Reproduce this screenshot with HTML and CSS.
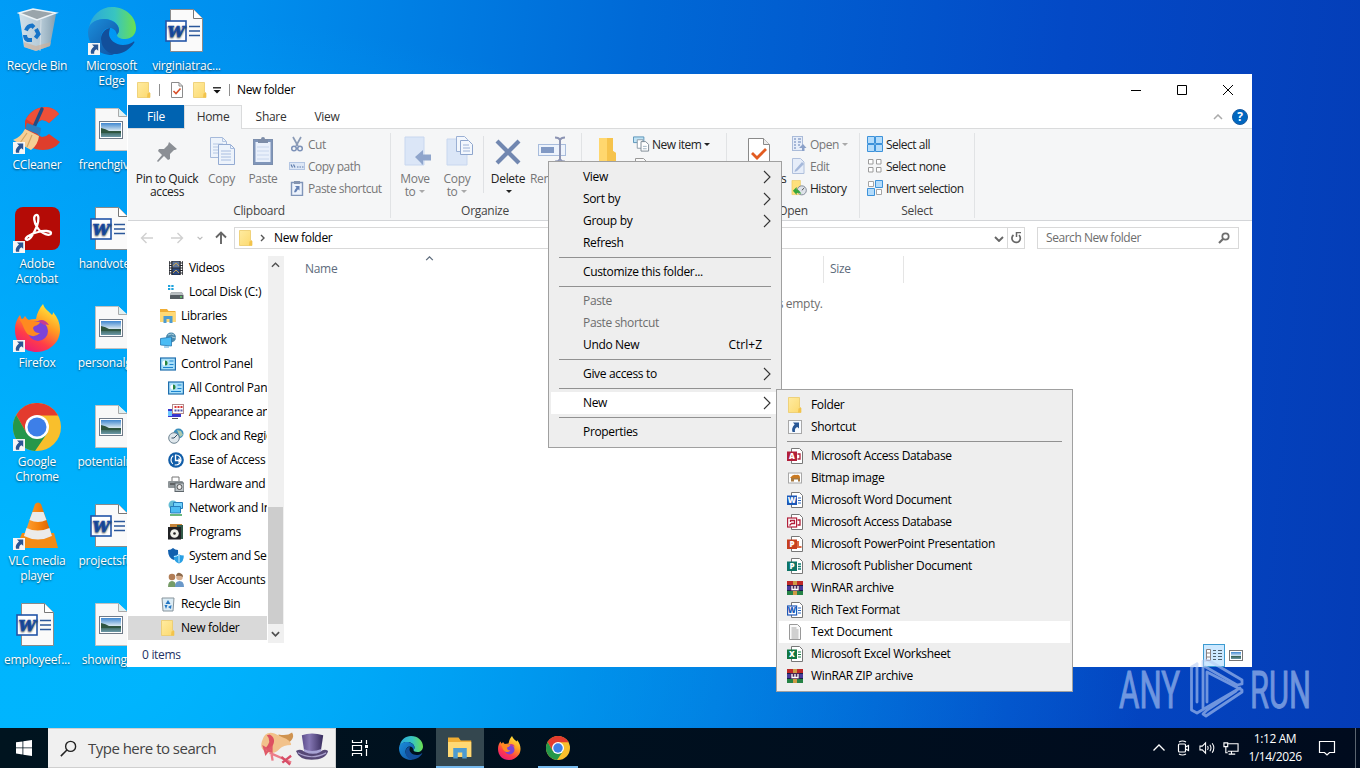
FILE: index.html
```html
<!DOCTYPE html>
<html lang="en">
<head>
    <meta charset="UTF-8">
    <meta name="viewport" content="width=device-width, initial-scale=1.0">
    <title>New folder</title>
    <link rel="stylesheet" href="styles.css">
</head>
<body>

<!-- Icon sprite -->
<svg class="sprite" aria-hidden="true">
  <defs>
    <linearGradient id="g-edge1" x1="0" y1="0" x2="1" y2="0"><stop offset="0" stop-color="#2aa7dc"/><stop offset=".55" stop-color="#38c5c0"/><stop offset="1" stop-color="#6be04f"/></linearGradient>
    <linearGradient id="g-edge2" x1="0" y1="0" x2="1" y2="1"><stop offset="0" stop-color="#1b8fdc"/><stop offset="1" stop-color="#0f50a0"/></linearGradient>
    <linearGradient id="g-fox" x1=".8" y1="0" x2=".25" y2="1"><stop offset="0" stop-color="#fff13f"/><stop offset=".4" stop-color="#ff9a22"/><stop offset=".72" stop-color="#ff3c48"/><stop offset="1" stop-color="#e8197d"/></linearGradient>
    <linearGradient id="g-fold" x1="0" y1="0" x2="1" y2="1"><stop offset="0" stop-color="#ffeba0"/><stop offset="1" stop-color="#fcd96e"/></linearGradient>
    <linearGradient id="g-photo" x1="0" y1="0" x2="0" y2="1"><stop offset="0" stop-color="#3f87d0"/><stop offset=".55" stop-color="#d5e6f0"/><stop offset=".6" stop-color="#35604f"/><stop offset="1" stop-color="#6c98a8"/></linearGradient>
    <linearGradient id="g-cone" x1="0" y1="0" x2="1" y2="0"><stop offset="0" stop-color="#ffa43a"/><stop offset=".5" stop-color="#f58410"/><stop offset="1" stop-color="#d95f00"/></linearGradient>
    <linearGradient id="g-bin" x1="0" y1="0" x2="1" y2="0"><stop offset="0" stop-color="#dfe6ea"/><stop offset=".6" stop-color="#c2ccd3"/><stop offset="1" stop-color="#8fa0ab"/></linearGradient>
    <linearGradient id="g-hat" x1="0" y1="0" x2="1" y2="0"><stop offset="0" stop-color="#5d4d8c"/><stop offset=".35" stop-color="#8577b4"/><stop offset="1" stop-color="#372b5c"/></linearGradient>
  </defs>

  <symbol id="shortcut-badge" viewBox="0 0 12 12">
    <rect width="12" height="12" fill="#f6f6f6"/>
    <path d="M4 1.500h6.200v6.200L8.500 6.200Q5.800 7.500 6.200 10.700H3Q1.800 7 6 3.600z" fill="#2a5593"/>
  </symbol>
  <symbol id="recycle" viewBox="0 0 48 48">
    <path d="M6 6l5 34 12 4 14-5 6-32-20 5z" fill="url(#g-bin)" opacity=".93"/>
    <path d="M6 6l14-4 23 4-19 7z" fill="#9aa5ab" stroke="#edf3f6" stroke-width="1.500"/>
    <path d="M28 13l-1 31" stroke="#e9eef1" opacity=".6"/>
    <g fill="none" stroke="#1674c8" stroke-width="4"><path d="M13 23.500q2-5 6-5l2 2"/><path d="M23 22l2.500 5-3 4"/><path d="M19 33h-4q-3-1-3-5"/></g>
    <path d="M11 40l12 4 14-5 1-4-15 4-12-4z" fill="#cfae94" opacity=".6"/>
  </symbol>
  <symbol id="edge" viewBox="0 0 48 48">
    <path d="M1 21C3 8 13 0 24 0c14 0 24 10 24 21 0 7-5 11-11 11-5 0-8-2-8-4 0-1 2-2 2-5 0-6-6-11-14-11C9 12 3 16 1 21z" fill="url(#g-edge1)"/>
    <path d="M24 48C10 48 0 38 0 25 0 17 7 12 16 12c8 0 15 5 15 11 0 3-2 4-2 5-1-5-4-7-7-7-5 0-9 4-9 10 0 8 7 14 15 15z" fill="url(#g-edge2)"/>
    <path d="M22 21c-5 1-9 5-9 11 0 9 8 16 16 15 7-1 13-5 17-11 1-1 0-2-1-1-3 2-6 3-10 3-8 0-14-6-14-11 0-3 1-5 1-6z" fill="#124f9b"/>
  </symbol>
  <symbol id="word" viewBox="0 0 48 48">
    <path d="M9.500 2.500h23l9 9v33h-32z" fill="#fafafa" stroke="#8a8a8a"/>
    <path d="M32.500 2.500v9h9" fill="#fff" stroke="#777"/>
    <path d="M28 19.500h11M28 24h11M28 28.500h11" stroke="#2b579a" stroke-width="1.300"/>
    <rect x="5" y="14" width="20" height="20" fill="#fff" stroke="#2355a8" stroke-width="1.600"/>
    <text x="15" y="30" text-anchor="middle" font-family="DejaVu Serif, serif" font-size="15" font-weight="bold" font-style="italic" fill="#1c51ac" stroke="#1c51ac" stroke-width=".7" textLength="17" lengthAdjust="spacingAndGlyphs">W</text>
  </symbol>
  <symbol id="photo" viewBox="0 0 48 48">
    <path d="M9.500 2.500h23l9 9v33h-32z" fill="#f8f8f8" stroke="#c0c0c0"/>
    <path d="M32.500 2.500v8h9" fill="#dff0f2" stroke="#aaa"/>
    <rect x="13.500" y="15.500" width="23" height="17" fill="#fff" stroke="#6f7a88"/>
    <rect x="15" y="17" width="20" height="14" fill="url(#g-photo)"/>
    <path d="M15 22q5 1 8 3h12v2H15z" fill="#2f5540"/>
  </symbol>
  <symbol id="ccleaner" viewBox="0 0 48 48">
    <path d="M46 8Q42 2 33 1A22 22 0 0 0 12 15v18Q16 44 30 44q11 0 17-8L36 28q-3 3-7 3a9 9 0 0 1 0-17q4 0 7 3z" fill="#df3e2c"/>
    <path d="M46 8Q42 2 33 1A22 22 0 0 0 13 13l9 6q2-5 7-5 4 0 7 3z" fill="#ef5038"/>
    <path d="M29 3l-8 18" stroke="#214d86" stroke-width="3.400" stroke-linecap="round"/>
    <path d="M14 17l14 5-1 7-15-6z" fill="#2c7fc0"/>
    <path d="M12 23l14 7q-1 9-8 14L0 34q8-3 12-11z" fill="#f5cf96"/>
    <path d="M14 27l-7 10M19 29l-5 12" stroke="#d5a463" stroke-width="1.200"/>
  </symbol>
  <symbol id="acrobat" viewBox="0 0 48 48">
    <rect x="2" y="2" width="45" height="43" rx="8" fill="#b40b06"/>
    <path d="M23 10c3-1 3 5 1 11-3 7-7 14-10 14-4-1 2-6 11-8 6-2 13-1 13 1 0 4-10 1-14-6-3-5-4-11-1-12z" fill="none" stroke="#fff" stroke-width="2.300"/>
  </symbol>
  <symbol id="firefox" viewBox="0 0 48 48">
    <path d="M30 0c2 6 6 7 9 11 1-1 1-2 1-3 8 9 9 20 4 29-5 7-12 11-20 11C11 48 2 39 2 26c0-7 2-11 5-15l2 5 3-4 3 4q4-1 8-1c1-6 3-10 7-15z" fill="url(#g-fox)"/>
    <circle cx="25" cy="27" r="10" fill="#7b43d8"/>
    <path d="M6 15q8-1 12 2l9 1c-1 4-6 3-7 6 1 4 3 5 7 5q-5 5-11 2C11 28 11 21 6 15z" fill="#ff8a20"/>
    <path d="M25 17q6-3 11 4-3-1-5 0z" fill="#c43b95"/>
  </symbol>
  <symbol id="chrome" viewBox="0 0 48 48">
    <circle cx="24" cy="24" r="24" fill="#f9bf2c"/>
    <path d="M3.200 12A24 24 0 0 1 44.800 12L44.800 12.500H24L13.600 30z" fill="#e33b2e"/>
    <path d="M3.200 12A24 24 0 0 0 22 48L34.400 30H13.600z" fill="#25974a"/>
    <circle cx="24" cy="24" r="12" fill="#fff"/>
    <circle cx="24" cy="24" r="9.500" fill="#3d7fe8"/>
  </symbol>
  <symbol id="vlc" viewBox="0 0 48 48">
    <path d="M9 31h32l4 15H3z" fill="#f38b16"/>
    <path d="M22 2q3-3 6 0l11 32q-14 7-28 0z" fill="url(#g-cone)"/>
    <path d="M19.500 10h11l3 8q-8.500 4-17 0zM13.500 26q11 5 23 0l2.500 8q-14 7-28 0z" fill="#ebebeb"/>
  </symbol>

  <symbol id="folder" viewBox="0 0 16 16">
    <path d="M1.500.5h11v10l1.500.5v4.500H1.500z" fill="url(#g-fold)" stroke="#ecca68" stroke-width=".8"/>
    <path d="M11.500 11.500L14 10.500v5h-3z" fill="#f3c34b"/>
  </symbol>
  <symbol id="check-page" viewBox="0 0 16 16">
    <path d="M2.500.500h7.500l3.500 3.500v11.500h-11z" fill="#fff" stroke="#8b8b8b"/><path d="M10 .5V4h3.500" fill="none" stroke="#8b8b8b"/>
    <path d="M4.500 9l2.500 2.500 4.500-5" fill="none" stroke="#d9502a" stroke-width="1.600"/>
  </symbol>
  <symbol id="pin" viewBox="0 0 24 24">
    <path d="M14 2l8 7-2 1-1 0-4 4 0 5-2 1-4-4-6 6-1-1 5-6-4-4 1-2 5 0 4-4z" fill="#8b8f95"/>
  </symbol>
  <symbol id="copy" viewBox="0 0 28 30">
    <path d="M2.500 1.500h12l4 4v16h-16z" fill="#edf3fb" stroke="#a6badb"/><path d="M14.500 1.500v4h4M5 8h10M5 11h10M5 14h10M5 17h10" fill="none" stroke="#b5c7e3"/>
    <path d="M10.500 8.500h12l4 4v16h-16z" fill="#edf3fb" stroke="#94abd2"/><path d="M22.500 8.500v4h4M13 15h10M13 18h10M13 21h10M13 24h10" fill="none" stroke="#a8bde0"/>
  </symbol>
  <symbol id="paste" viewBox="0 0 24 30">
    <rect x="2.500" y="3.500" width="19" height="25" fill="#8096ba" stroke="#7c8fae"/><rect x="4.500" y="6" width="15" height="20" fill="#e9f0fb"/>
    <path d="M7 3h3q0-2 2-2t2 2h3v4H7z" fill="#7d8da8"/><path d="M6 11h12M6 15h12M6 19h12M6 23h12" stroke="#c8d6ed"/>
  </symbol>
  <symbol id="cut" viewBox="0 0 16 16">
    <path d="M4 1l5 9M12 1L7 10" stroke="#8b9bb6" stroke-width="1.700"/><circle cx="5" cy="12.500" r="2.300" fill="none" stroke="#7d92b8" stroke-width="1.500"/><circle cx="11" cy="12.500" r="2.300" fill="none" stroke="#7d92b8" stroke-width="1.500"/>
  </symbol>
  <symbol id="copy-path" viewBox="0 0 16 16">
    <rect x=".5" y="4.500" width="15" height="7" fill="#dde7f6" stroke="#b4c6e3"/><path d="M2 6.500l1.500 3M4.500 6.500l1.500 3M8 9h1.500M10.500 9H12M13 9h1.500" stroke="#5e7bab" stroke-width="1.200"/>
  </symbol>
  <symbol id="paste-shortcut" viewBox="0 0 16 16">
    <path d="M2.500 2.500h11v13h-11z" fill="#edf3fc" stroke="#8095b9" stroke-width="1.400"/><path d="M5 1h6v3H5z" fill="#8494b0"/><path d="M6 6h4.500v4.500L9 9.300l-2 3H5q.5-3 2.500-4.500z" fill="#6481b5"/>
  </symbol>
  <symbol id="move-to" viewBox="0 0 28 30">
    <path d="M2 1h19v28H2z" fill="#dbe6f7" stroke="#c8d7ef"/><path d="M18 26l3-1v4h-3z" fill="#c6d5ee"/><path d="M12 21l8-7v4.500h8v6h-8V29z" fill="#8fa5cc"/>
  </symbol>
  <symbol id="copy-to" viewBox="0 0 28 30">
    <path d="M1 3h20v26H1z" fill="#dbe6f7" stroke="#c8d7ef"/><path d="M10.500.500h8l3 3v12h-11z" fill="#f3f7fd" stroke="#9bb0d4"/><path d="M14.500 4.500h8l4 4v10h-12z" fill="#f3f7fd" stroke="#8fa6cd"/><path d="M17 9h6M17 12h7M17 15h7" stroke="#9db2d6"/>
  </symbol>
  <symbol id="delete" viewBox="0 0 28 28"><path d="M3 3l22 22M25 3L3 25" stroke="#7187b0" stroke-width="4.200"/></symbol>
  <symbol id="rename" viewBox="0 0 30 28">
    <rect x="1.500" y="8.500" width="27" height="11" fill="#edf3fc" stroke="#a8bcdc"/><rect x="4" y="11" width="13" height="6" fill="#8199c4"/>
    <path d="M18 1.500q4 0 5 2.500 1-2.500 5-2.500M23 4v19M18 25.500q4 0 5-2.500 1 2.500 5 2.500" fill="none" stroke="#8c94b3" stroke-width="2"/>
  </symbol>
  <symbol id="new-folder" viewBox="0 0 20 28"><path d="M1 2h14v13l3 2v10H1z" fill="#ffd76e"/><path d="M9 2h6v13l3 2v10H9z" fill="#f6c34c"/></symbol>
  <symbol id="new-item" viewBox="0 0 18 16">
    <path d="M.5.500h11v6H.5z" fill="#bfe3f5" stroke="#5a93b8"/><path d="M4.500 3.500h6v9h-6z" fill="#fff" stroke="#8b99a6"/><path d="M8.500 5.500h5l3 3v7h-8z" fill="#fff" stroke="#7c8894"/><path d="M10.500 10.500h4M10.500 13h4" stroke="#9fb2c2"/>
  </symbol>
  <symbol id="properties" viewBox="0 0 22 28"><path d="M.5.500h15l6 6v21H.5z" fill="#fff" stroke="#8a8a8a"/><path d="M15.500.500v6h6" fill="#ececec" stroke="#8a8a8a"/><path d="M4 15l5 5L18 11" fill="none" stroke="#e25b20" stroke-width="2.800"/></symbol>
  <symbol id="open" viewBox="0 0 16 16">
    <rect x="1.500" y=".5" width="10" height="14" fill="#e6edf9" stroke="#aabbd9"/><path d="M3 3h2M3 6h2M3 9h2M3 12h2M7 3h3M7 6h3M7 9h2" stroke="#8ea4cb" stroke-width="1.500"/><path d="M11 15v-3H8l4-4 3.500 4h-2v3z" fill="#8ba1c9"/>
  </symbol>
  <symbol id="edit" viewBox="0 0 16 16"><path d="M1.500.500h8l3.500 3.500v11.500H1.500z" fill="#e6edf9" stroke="#b0c0dc"/><path d="M4 12l7-8 2 2-7 7-2.500 1z" fill="#a5b8da"/></symbol>
  <symbol id="history" viewBox="0 0 17 16"><path d="M1 0h9v15H1z" fill="#ffe07c" stroke="#e8c458" stroke-width=".6"/><circle cx="11.500" cy="10.500" r="4.800" fill="#dfe3ea" stroke="#7e8794"/><path d="M11.500 10.500l2.500-2.500" stroke="#444"/><path d="M2 11l4-4v2.500q3 0 5 5-4-2-5-1v2z" fill="#37a53c"/></symbol>
  <symbol id="select-all" viewBox="0 0 16 16"><path d="M.500.500h7v7h-7zM8.500.500h7v7h-7zM.5 8.500h7v7h-7zM8.500 8.500h7v7h-7z" fill="#b4dcfb" stroke="#3d92da"/></symbol>
  <symbol id="select-none" viewBox="0 0 16 16"><path d="M1.500 1.500h4.500v4.500H1.500zM9.500 1.500h4.500v4.500H9.500zM1.500 9.500h4.500v4.500H1.500zM9.500 9.500h4.500v4.500H9.500z" fill="#fff" stroke="#9c9c9c"/></symbol>
  <symbol id="select-invert" viewBox="0 0 16 16"><path d="M1.500 1.500h5v5h-5zM9.500 9.500h5v5h-5z" fill="#fff" stroke="#a5a5a5"/><path d="M8.500.500h7v7h-7zM.5 8.500h7v7h-7z" fill="#b4dcfb" stroke="#3d92da"/></symbol>

  <symbol id="chev-right" viewBox="0 0 8 14"><path d="M1 1l6 6-6 6" fill="none" stroke="#333" stroke-width="1.100"/></symbol>
  <symbol id="crumb-right" viewBox="0 0 5 8"><path d="M1 1l3 3-3 3" fill="none" stroke="#555" stroke-width="1.400"/></symbol>
  <symbol id="chev-up" viewBox="0 0 10 6"><path d="M1 5l4-4 4 4" fill="none" stroke="currentColor" stroke-width="1.500"/></symbol>
  <symbol id="chev-down" viewBox="0 0 10 6"><path d="M1 1l4 4 4-4" fill="none" stroke="currentColor" stroke-width="1.900"/></symbol>
  <symbol id="arrow-left" viewBox="0 0 14 12"><path d="M13 6H2M6.500 1L1.500 6l5 5" fill="none" stroke="currentColor" stroke-width="1.400"/></symbol>
  <symbol id="arrow-up" viewBox="0 0 12 14"><path d="M6 13V2M1 6.500L6 1.500l5 5" fill="none" stroke="#666" stroke-width="1.900"/></symbol>
  <symbol id="refresh" viewBox="0 0 12 12"><path d="M9 3.200A4.200 4.200 0 1 1 3.500 3" fill="none" stroke="#666" stroke-width="1.700"/><path d="M6.500 0v4.500H11" fill="none" stroke="#666" stroke-width="1.500" transform="rotate(90 8.500 2.500)"/></symbol>
  <symbol id="magnifier" viewBox="0 0 16 16"><circle cx="10" cy="6" r="4.700" fill="none" stroke="currentColor" stroke-width="1.300"/><path d="M6.500 9.500L.8 15.200" stroke="currentColor" stroke-width="1.400"/></symbol>
  <symbol id="magnifier-bold" viewBox="0 0 12 12"><circle cx="7.500" cy="4.500" r="3.200" fill="none" stroke="#6d6d6d" stroke-width="1.700"/><path d="M5 7L1 11" stroke="#6d6d6d" stroke-width="2.200"/></symbol>

  <symbol id="videos" viewBox="0 0 16 16"><rect x="1" y="1" width="14" height="14" fill="#26282e"/><rect x="4.500" y="1.500" width="7" height="6" fill="#61779b"/><rect x="4.500" y="8.500" width="7" height="6" fill="#2c4a82"/><path d="M2.500 1v14M13.500 1v14" stroke="#fff" stroke-width="1.500" stroke-dasharray="1.500 1"/><path d="M5 6l3-3 3 3M5 13l3-3 3 3" fill="none" stroke="#c5a152"/></symbol>
  <symbol id="disk" viewBox="0 0 16 16"><path d="M0 1h2.300v2H0zM3.300 1h2.300v2H3.300zM0 4h2.300v2H0zM3.300 4h2.300v2H3.300z" fill="#1fa3dd"/><path d="M3 8.500h11l1.500 3v3.500H2v-3.500z" fill="#555c61"/><path d="M3 8.500h11l1.500 2.500H2z" fill="#b9bec1"/><rect x="12" y="12.300" width="2" height="1.300" fill="#66df69"/></symbol>
  <symbol id="libraries" viewBox="0 0 16 16"><path d="M0 1h7l1.500 2H15.500v11H0z" fill="#f0ad33"/><path d="M0 4h15.500v10H0z" fill="#ffd974"/><path d="M3.500 15V8h9v7h-3v-4h-3v4z" fill="#4d9bd0"/></symbol>
  <symbol id="network" viewBox="0 0 16 16"><circle cx="11" cy="5.500" r="5" fill="#4e8cae"/><path d="M8 3q4-2 6 0M7 6q5-2 9 0" stroke="#a8cddc" fill="none"/><path d="M.500 6.500l11-1.500v9l-11-1z" fill="#4bbcf5" stroke="#2678b3" stroke-width=".8"/><path d="M4 15h5" stroke="#54a8de"/></symbol>
  <symbol id="control" viewBox="0 0 16 16"><rect x=".6" y="2" width="14.800" height="12" fill="#a9e0fa" stroke="#1e6eae" stroke-width="1.200"/><circle cx="5" cy="7" r="2.600" fill="#fff"/><path d="M5 7V4.400A2.600 2.600 0 0 1 5 9.600z" fill="#238442"/><path d="M9.500 5h4M9.500 8.500h4M3 11.500h10" stroke="#1e85d0" stroke-width="1.200"/></symbol>
  <symbol id="appearance" viewBox="0 0 16 16"><rect x="0" y="5" width="13" height="8" fill="#3936cf"/><path d="M0 7h4v5H0z" fill="#6ec7ff"/><rect x="4.500" y=".5" width="11" height="9" fill="#fff" stroke="#b48a8a"/><path d="M6.500 3h2M9.500 3h2M12.500 3h2" stroke="#da3535" stroke-width="2"/><path d="M6.500 6.500h2M9.500 6.500h2M12.500 6.500h2" stroke="#4a54aa" stroke-width="2"/><path d="M4 14.500h6" stroke="#555"/></symbol>
  <symbol id="clock" viewBox="0 0 16 16"><circle cx="10.500" cy="5.500" r="5" fill="#3c8fbc"/><path d="M9 2l4 1 2 4-3 2z" fill="#adc9ae"/><circle cx="6" cy="10" r="5.300" fill="#dfe7ec" stroke="#6e8392"/><path d="M6 10l3.500-3.500M6 10H3.500" stroke="#344d61"/></symbol>
  <symbol id="ease" viewBox="0 0 16 16"><circle cx="8" cy="8" r="7.800" fill="#115da8"/><circle cx="8" cy="8" r="5" fill="none" stroke="#fff" stroke-width="1.200" stroke-dasharray="9 2"/><path d="M7.500 3v5.500h5M10.500 6.500l2 2-2 2" fill="none" stroke="#fff" stroke-width="1.300"/></symbol>
  <symbol id="hardware" viewBox="0 0 16 16"><path d="M4 1h7v5H4z" fill="#fff" stroke="#777"/><rect x="0" y="5" width="15" height="7" rx="1" fill="#8e9598"/><path d="M2 8h8" stroke="#333"/><rect x="7" y="7" width="9" height="8.500" fill="#bbc2c6" stroke="#5e666b"/><circle cx="11.500" cy="11" r="2.500" fill="#eee" stroke="#555"/></symbol>
  <symbol id="netint" viewBox="0 0 16 16"><circle cx="5" cy="5" r="4.500" fill="#64bdd5"/><path d="M5.500 2.500h9v6h-9z" fill="#6fd0fb" stroke="#267ebc"/><path d="M2.500 6.500h10v6.500h-10z" fill="#4dbcf2" stroke="#267ebc"/><path d="M2 15h12" stroke="#59b06f" stroke-width="1.800"/></symbol>
  <symbol id="programs" viewBox="0 0 16 16"><path d="M2 0h12v12H2z" fill="#c7863a"/><path d="M9 1h6v14H9z" fill="#315948"/><rect x="0" y="3" width="13" height="12.500" fill="#202124"/><circle cx="6.500" cy="9.500" r="4.300" fill="#f0f1ea"/><circle cx="6.500" cy="9.500" r="1.300" fill="#222"/></symbol>
  <symbol id="security" viewBox="0 0 16 16"><path d="M0 2q3 0 5-2 2 2 5 2 1 7-4 10Q0 10 0 2z" fill="#1260ae"/><path d="M5.500 8q3 0 5-2 2 1.500 5.300 1.500Q16 14 11 15.500 6 14 5.500 8z" fill="#29a0e4"/><path d="M6 8.500q3 0 5-2v8" fill="none" stroke="#d1efff"/></symbol>
  <symbol id="users" viewBox="0 0 16 16"><path d="M0 15q0-6 4-6t4 6z" fill="#769c67"/><circle cx="4" cy="5" r="3.300" fill="#b17d55"/><path d="M7 15q0-6 4.500-6T16 15z" fill="#6a98c9"/><circle cx="11.500" cy="5" r="3.300" fill="#d7ae8e"/><path d="M8 4q1-4 4-3t3 4q-3-2-7-1z" fill="#8c6a4b"/></symbol>
  <symbol id="bin-small" viewBox="0 0 16 16"><path d="M2 2h12l-1 13H3z" fill="#dcecf5" stroke="#86939b"/><path d="M8 4l2.500 4h-5zM4.500 9h3l-1.500 4zM11.500 9l-.5 4-3-2z" fill="#2376c3"/></symbol>

  <symbol id="shortcut-small" viewBox="0 0 16 16"><rect x="1.500" y="1.500" width="13" height="13" fill="#f8fbff" stroke="#a8a8a8"/><path d="M6 3.500h6v6L10.300 8q-3 1-2.300 5H5.500Q4 9 7.700 5.500z" fill="#285796"/></symbol>
  <symbol id="access1" viewBox="0 0 16 16"><path d="M4.500.500h8l3 3v12h-11z" fill="#fff" stroke="#777"/><path d="M10.500 6H13v5h-2.500" stroke="#b01f38" fill="none" stroke-width="1.300"/><rect y="3.500" width="10" height="9.500" fill="#b21f3a"/><text class="glyph" x="5" y="11.300" fill="#fff">A</text></symbol>
  <symbol id="access2" viewBox="0 0 16 16"><path d="M4.500.500h8l3 3v12h-11z" fill="#fff" stroke="#777"/><path d="M10.500 6H13v5h-2.500" stroke="#b01f38" fill="none" stroke-width="1.300"/><rect x=".6" y="4" width="9" height="9" fill="#fff" stroke="#b21f3a" stroke-width="1.200"/><path d="M3.500 8V6.500h4v3h-3L2.500 11.500" fill="none" stroke="#b21f3a" stroke-width="1.300"/></symbol>
  <symbol id="bitmap" viewBox="0 0 16 16"><rect x="1.500" y="3" width="13" height="10" fill="#fff" stroke="#a8a8a8"/><path d="M3 8q3-4 6-3 4-1 4 3z" fill="#ca7a22"/><path d="M4 8h9v3.500h-2V9.500H7v2H4z" fill="#a8793f"/></symbol>
  <symbol id="word-small" viewBox="0 0 16 16"><path d="M4.500.500h8l3 3v12h-11z" fill="#fff" stroke="#777"/><path d="M11 6h3M11 8.500h3M11 11h3" stroke="#2b66bd"/><rect y="3.500" width="10" height="9.500" fill="#1d58b7"/><text class="glyph" x="5" y="11.300" fill="#fff">W</text></symbol>
  <symbol id="rtf" viewBox="0 0 16 16"><path d="M4.500.500h8l3 3v12h-11z" fill="#fff" stroke="#777"/><path d="M11 6h3M11 8.500h3M11 11h3" stroke="#2b66bd"/><rect x=".6" y="4" width="9" height="9" fill="#fff" stroke="#1d58b7" stroke-width="1.200"/><text class="glyph" x="5" y="11.300" fill="#1d58b7">W</text></symbol>
  <symbol id="ppt" viewBox="0 0 16 16"><path d="M4.500.500h8l3 3v12h-11z" fill="#fff" stroke="#777"/><path d="M11 5v6h3.500" fill="none" stroke="#de6a43" stroke-width="2"/><rect y="3.500" width="10" height="9.500" fill="#c6401f"/><text class="glyph" x="5" y="11.300" fill="#fff">P</text></symbol>
  <symbol id="publisher" viewBox="0 0 16 16"><path d="M4.500.500h8l3 3v12h-11z" fill="#fff" stroke="#777"/><path d="M11 6h3M11 8.500h3M11 11h3" stroke="#0d7c70" stroke-width="1.400"/><rect y="3.500" width="10" height="9.500" fill="#0d7467"/><text class="glyph" x="5" y="11.300" fill="#fff">P</text></symbol>
  <symbol id="excel" viewBox="0 0 16 16"><path d="M4.500.500h8l3 3v12h-11z" fill="#fff" stroke="#777"/><path d="M11 6h3M11 8.500h3M11 11h3" stroke="#157f46" stroke-width="1.200"/><rect y="3.500" width="10" height="9.500" fill="#127641"/><text class="glyph" x="5" y="11.300" fill="#fff">X</text></symbol>
  <symbol id="winrar" viewBox="0 0 16 16"><rect y="1" width="16" height="5" fill="#be2929"/><rect y="6" width="16" height="5" fill="#493b9c"/><rect y="11" width="16" height="4" fill="#258245"/><path d="M0 5.500h16M0 10.500h16" stroke="#15214a"/><rect x="6" y="1" width="4" height="14" fill="#ce9a45"/><rect x="3.500" y="5" width="9" height="6" fill="#4b2854"/><path d="M5 6v3.500h6V6M8 6v3.500" fill="none" stroke="#fff" stroke-width="1.300"/></symbol>
  <symbol id="text-doc" viewBox="0 0 16 16"><path d="M2.500.500h8l3 3v12h-11z" fill="#fafafa" stroke="#999"/><path d="M4.500 4h5M4.500 6h7M4.500 8h7M4.500 10h7M4.500 12h7M4.500 14h7" stroke="#a6a6a6"/></symbol>
</svg>

<div class="desktop">
  <!-- Desktop shortcuts -->
  <div class="icon-grid">
    <div class="icon-column">
      <div class="desk-icon"><div class="pic"><svg><use href="#recycle"/></svg></div><span>Recycle Bin</span></div>
      <div class="desk-icon"><div class="pic linked"><svg><use href="#ccleaner"/></svg><svg class="badge"><use href="#shortcut-badge"/></svg></div><span>CCleaner</span></div>
      <div class="desk-icon"><div class="pic linked"><svg><use href="#acrobat"/></svg><svg class="badge"><use href="#shortcut-badge"/></svg></div><span>Adobe<br>Acrobat</span></div>
      <div class="desk-icon"><div class="pic linked"><svg><use href="#firefox"/></svg><svg class="badge"><use href="#shortcut-badge"/></svg></div><span>Firefox</span></div>
      <div class="desk-icon"><div class="pic linked"><svg><use href="#chrome"/></svg><svg class="badge"><use href="#shortcut-badge"/></svg></div><span>Google<br>Chrome</span></div>
      <div class="desk-icon"><div class="pic linked"><svg><use href="#vlc"/></svg><svg class="badge"><use href="#shortcut-badge"/></svg></div><span>VLC media<br>player</span></div>
      <div class="desk-icon"><div class="pic doc"><svg><use href="#word"/></svg></div><span>employeef...</span></div>
    </div>
    <div class="icon-column">
      <div class="desk-icon"><div class="pic linked"><svg><use href="#edge"/></svg><svg class="badge"><use href="#shortcut-badge"/></svg></div><span>Microsoft<br>Edge</span></div>
      <div class="desk-icon"><div class="pic doc"><svg><use href="#photo"/></svg></div><span>frenchgive...</span></div>
      <div class="desk-icon"><div class="pic doc"><svg><use href="#word"/></svg></div><span>handvotes...</span></div>
      <div class="desk-icon"><div class="pic doc"><svg><use href="#photo"/></svg></div><span>personalgr...</span></div>
      <div class="desk-icon"><div class="pic doc"><svg><use href="#photo"/></svg></div><span>potentialre...</span></div>
      <div class="desk-icon"><div class="pic doc"><svg><use href="#word"/></svg></div><span>projectsful...</span></div>
      <div class="desk-icon"><div class="pic doc"><svg><use href="#photo"/></svg></div><span>showings...</span></div>
    </div>
    <div class="icon-column">
      <div class="desk-icon"><div class="pic doc"><svg><use href="#word"/></svg></div><span>virginiatrac...</span></div>
    </div>
  </div>

  <!-- Explorer window -->
  <div class="window">
    <div class="title-bar">
      <div class="quick-access">
        <svg class="i16"><use href="#folder"/></svg>
        <i class="bar"></i>
        <svg class="i16 props"><use href="#check-page"/></svg>
        <svg class="i16"><use href="#folder"/></svg>
        <svg class="qa-menu" viewBox="0 0 8 7"><path d="M0 .8h8" stroke="#111" stroke-width="1.300"/><path d="M.5 3h7L4 6.500z" fill="#111"/></svg>
        <i class="bar"></i>
      </div>
      <span class="title">New folder</span>
      <div class="caption-buttons">
        <svg viewBox="0 0 12 12"><path d="M1 6.500h10" stroke="#000"/></svg>
        <svg viewBox="0 0 12 12"><path d="M1.500 1.500h9v9h-9z" fill="none" stroke="#000"/></svg>
        <svg viewBox="0 0 12 12"><path d="M1 1l10 10M11 1L1 11" stroke="#000"/></svg>
      </div>
    </div>

    <div class="tabs">
      <span class="tab file">File</span>
      <span class="tab active">Home</span>
      <span class="tab">Share</span>
      <span class="tab">View</span>
      <div class="tabs-right">
        <svg class="collapse"><use href="#chev-up"/></svg>
        <span class="help">?</span>
      </div>
    </div>

    <div class="ribbon">
      <div class="group clipboard">
        <div class="group-body">
          <div class="big pin"><svg><use href="#pin"/></svg><span>Pin to Quick<br>access</span></div>
          <div class="big off copy"><svg><use href="#copy"/></svg><span>Copy</span></div>
          <div class="big off paste"><svg><use href="#paste"/></svg><span>Paste</span></div>
          <div class="small-list">
            <div class="small off"><svg class="i16"><use href="#cut"/></svg>Cut</div>
            <div class="small off"><svg class="i16"><use href="#copy-path"/></svg>Copy path</div>
            <div class="small off"><svg class="i16"><use href="#paste-shortcut"/></svg>Paste shortcut</div>
          </div>
        </div>
        <div class="group-name">Clipboard</div>
      </div>
      <div class="group organize">
        <div class="group-body">
          <div class="big off move"><svg><use href="#move-to"/></svg><span>Move<br>to <i class="caret"></i></span></div>
          <div class="big off copyto"><svg><use href="#copy-to"/></svg><span>Copy<br>to <i class="caret"></i></span></div>
          <i class="divider"></i>
          <div class="big delete"><svg><use href="#delete"/></svg><span>Delete<br><i class="caret"></i></span></div>
          <div class="big off rename"><svg><use href="#rename"/></svg><span>Rename</span></div>
        </div>
        <div class="group-name">Organize</div>
      </div>
      <div class="group new">
        <div class="group-body">
          <div class="big newfolder"><svg><use href="#new-folder"/></svg><span>New<br>folder</span></div>
          <div class="small-list">
            <div class="small"><svg class="i16 wide"><use href="#new-item"/></svg>New item <i class="caret"></i></div>
            <div class="small"><svg class="i16"><use href="#text-doc"/></svg>Easy access <i class="caret"></i></div>
          </div>
        </div>
        <div class="group-name">New</div>
      </div>
      <div class="group opening">
        <div class="group-body">
          <div class="big properties"><svg><use href="#properties"/></svg><span>Properties</span></div>
          <div class="small-list">
            <div class="small off"><svg class="i16"><use href="#open"/></svg>Open <i class="caret"></i></div>
            <div class="small off"><svg class="i16"><use href="#edit"/></svg>Edit</div>
            <div class="small"><svg class="i16"><use href="#history"/></svg>History</div>
          </div>
        </div>
        <div class="group-name">Open</div>
      </div>
      <div class="group selecting">
        <div class="group-body">
          <div class="small-list">
            <div class="small"><svg class="i16"><use href="#select-all"/></svg>Select all</div>
            <div class="small"><svg class="i16"><use href="#select-none"/></svg>Select none</div>
            <div class="small"><svg class="i16"><use href="#select-invert"/></svg>Invert selection</div>
          </div>
        </div>
        <div class="group-name">Select</div>
      </div>
    </div>

    <div class="nav-bar">
      <div class="history-buttons">
        <svg class="back"><use href="#arrow-left"/></svg>
        <svg class="forward"><use href="#arrow-left"/></svg>
        <svg class="recent"><use href="#chev-down"/></svg>
        <svg class="up"><use href="#arrow-up"/></svg>
      </div>
      <div class="address">
        <svg class="i16"><use href="#folder"/></svg>
        <svg class="crumb"><use href="#crumb-right"/></svg>
        <span>New folder</span>
        <svg class="drop"><use href="#chev-down"/></svg>
        <div class="reload"><svg><use href="#refresh"/></svg></div>
      </div>
      <div class="search">
        <span>Search New folder</span>
        <svg><use href="#magnifier-bold"/></svg>
      </div>
    </div>

    <div class="main">
      <div class="tree">
        <div class="node sub"><svg class="i16"><use href="#videos"/></svg><span>Videos</span></div>
        <div class="node sub"><svg class="i16"><use href="#disk"/></svg><span>Local Disk (C:)</span></div>
        <div class="node"><svg class="i16"><use href="#libraries"/></svg><span>Libraries</span></div>
        <div class="node"><svg class="i16"><use href="#network"/></svg><span>Network</span></div>
        <div class="node"><svg class="i16"><use href="#control"/></svg><span>Control Panel</span></div>
        <div class="node sub"><svg class="i16"><use href="#control"/></svg><span>All Control Panel Items</span></div>
        <div class="node sub"><svg class="i16"><use href="#appearance"/></svg><span>Appearance and Personalization</span></div>
        <div class="node sub"><svg class="i16"><use href="#clock"/></svg><span>Clock and Region</span></div>
        <div class="node sub"><svg class="i16"><use href="#ease"/></svg><span>Ease of Access</span></div>
        <div class="node sub"><svg class="i16"><use href="#hardware"/></svg><span>Hardware and Sound</span></div>
        <div class="node sub"><svg class="i16"><use href="#netint"/></svg><span>Network and Internet</span></div>
        <div class="node sub"><svg class="i16"><use href="#programs"/></svg><span>Programs</span></div>
        <div class="node sub"><svg class="i16"><use href="#security"/></svg><span>System and Security</span></div>
        <div class="node sub"><svg class="i16"><use href="#users"/></svg><span>User Accounts</span></div>
        <div class="node"><svg class="i16"><use href="#bin-small"/></svg><span>Recycle Bin</span></div>
        <div class="node selected"><svg class="i16"><use href="#folder"/></svg><span>New folder</span></div>
      </div>
      <div class="scrollbar">
        <svg><use href="#chev-up"/></svg>
        <div class="thumb"></div>
        <svg><use href="#chev-down"/></svg>
      </div>
      <div class="files">
        <div class="columns">
          <div class="col name">Name<svg class="sort"><use href="#chev-up"/></svg></div>
          <div class="col size">Size</div>
        </div>
        <div class="empty">This folder is empty.</div>
      </div>
    </div>

    <div class="status-bar">
      <span>0 items</span>
      <div class="view-modes">
        <div class="mode on"><svg viewBox="0 0 18 16"><path d="M1.500 2.500h4v11h-4zM1.500 6h4M1.500 10h4" fill="#fff" stroke="#8a8080"/><path d="M8 3.500h3M13 3.500h4M8 6.500h3M13 6.500h4M8 9.500h3M13 9.500h4M8 12.500h3M13 12.500h4" stroke="#4c5f6c"/></svg></div>
        <div class="mode"><svg viewBox="0 0 18 16"><rect x="2.500" y="3.500" width="13" height="10" fill="#fff" stroke="#777"/><rect x="4" y="5" width="10" height="7" fill="url(#g-photo)"/></svg></div>
      </div>
    </div>
  </div>

  <!-- Context menu -->
  <div class="menu context">
    <div class="item">View<svg><use href="#chev-right"/></svg></div>
    <div class="item">Sort by<svg><use href="#chev-right"/></svg></div>
    <div class="item">Group by<svg><use href="#chev-right"/></svg></div>
    <div class="item">Refresh</div>
    <hr>
    <div class="item">Customize this folder...</div>
    <hr>
    <div class="item off">Paste</div>
    <div class="item off">Paste shortcut</div>
    <div class="item">Undo New<kbd>Ctrl+Z</kbd></div>
    <hr>
    <div class="item">Give access to<svg><use href="#chev-right"/></svg></div>
    <hr>
    <div class="item hot">New<svg><use href="#chev-right"/></svg></div>
    <hr>
    <div class="item">Properties</div>
  </div>

  <!-- "New" submenu -->
  <div class="menu submenu">
    <div class="item"><svg class="i16"><use href="#folder"/></svg>Folder</div>
    <div class="item"><svg class="i16"><use href="#shortcut-small"/></svg>Shortcut</div>
    <hr>
    <div class="item"><svg class="i16"><use href="#access1"/></svg>Microsoft Access Database</div>
    <div class="item"><svg class="i16"><use href="#bitmap"/></svg>Bitmap image</div>
    <div class="item"><svg class="i16"><use href="#word-small"/></svg>Microsoft Word Document</div>
    <div class="item"><svg class="i16"><use href="#access2"/></svg>Microsoft Access Database</div>
    <div class="item"><svg class="i16"><use href="#ppt"/></svg>Microsoft PowerPoint Presentation</div>
    <div class="item"><svg class="i16"><use href="#publisher"/></svg>Microsoft Publisher Document</div>
    <div class="item"><svg class="i16"><use href="#winrar"/></svg>WinRAR archive</div>
    <div class="item"><svg class="i16"><use href="#rtf"/></svg>Rich Text Format</div>
    <div class="item hot"><svg class="i16"><use href="#text-doc"/></svg>Text Document</div>
    <div class="item"><svg class="i16"><use href="#excel"/></svg>Microsoft Excel Worksheet</div>
    <div class="item"><svg class="i16"><use href="#winrar"/></svg>WinRAR ZIP archive</div>
  </div>

  <!-- Watermark -->
  <svg class="watermark" viewBox="0 0 194 66">
    <text x="1" y="52" textLength="61" lengthAdjust="spacingAndGlyphs">ANY</text>
    <text x="132" y="52" textLength="61" lengthAdjust="spacingAndGlyphs">RUN</text>
    <g fill="none" stroke-width="2.800" stroke-linejoin="round" stroke-linecap="round">
      <path d="M79 8L73.500 11V54L79 57L122 32"/>
      <path d="M79 8V46M85 52V5L90 4L124 24V28L119 29L86 10"/>
      <path d="M89 46V16L124 34L124 36L88 60L85 58L89 54L118 35"/>
    </g>
  </svg>

  <!-- Taskbar -->
  <div class="taskbar">
    <div class="start"><svg viewBox="0 0 16 16"><path d="M0 2.300l6.500-.9v6.100H0zM7.300 1.300L16 0v7.500H7.300zM0 8.300h6.500v6.200L0 13.600zM7.300 8.300H16V16l-8.700-1.300z" fill="#fff"/></svg></div>
    <div class="search-box">
      <svg class="mag"><use href="#magnifier"/></svg>
      <span>Type here to search</span>
      <svg class="hats" viewBox="0 0 74 38">
        <path d="M20 5q9 2 14-2c4 6-3 12-12 14z" fill="#cf9350"/>
        <path d="M3 12Q6 1 16 4l8 4q9 3 9 8-8 0-12 4-4 5-10 4Q0 22 3 12z" fill="#f2c28b"/>
        <path d="M11 5Q20 10 11 21L6 20Q14 12 8 6z" fill="#dd5160"/>
        <path d="M5 18l5 3-3 4zM10 20l3-2v6z" fill="#ec6c78" stroke="#df5a68" stroke-width="2"/>
        <path d="M11 24l14 6 8 4M13 26l1 6" fill="none" stroke="#ec7c88" stroke-width="2.400"/>
        <path d="M24 34l9-7M23 28l9 8" fill="none" stroke="#d74d67" stroke-width="2.400"/>
        <path d="M44 6q10-4 22 0l-3 20H47z" fill="url(#g-hat)"/>
        <path d="M46 20q8 4 18 0v6H47z" fill="#a9a4d6"/>
        <path d="M38 22q5-3 9 1 9 4 16 0 4-4 8-1-2 9-17 9-13 0-16-9z" fill="#564876"/>
        <path d="M40 24q14 8 29 0" fill="none" stroke="#aaa1ce" stroke-width="1.200"/>
      </svg>
    </div>
    <div class="task-view"><svg viewBox="0 0 18 18"><path d="M1.500 1v2.500h9V1M1.500 17v-2.500h9V17M1.500 6.500h9v5h-9zM15.500 1v4M15.500 10v7" fill="none" stroke="#fff" stroke-width="1.200"/><rect x="14" y="6" width="3" height="3" fill="#fff"/></svg></div>
    <div class="apps">
      <div class="app"><svg><use href="#edge"/></svg></div>
      <div class="app current"><svg><use href="#libraries"/></svg></div>
      <div class="app"><svg><use href="#firefox"/></svg></div>
      <div class="app running"><svg><use href="#chrome"/></svg></div>
    </div>
    <div class="tray">
      <svg viewBox="0 0 16 16"><path d="M2.500 10.500L8 5l5.500 5.500" fill="none" stroke="#fff" stroke-width="1.300"/></svg>
      <svg viewBox="0 0 16 16"><path d="M4 2q3.500-2 7 0M4 14q3.500 2 7 0M3.500 5q0-1 1-1h5q1 0 1 1v6q0 1-1 1h-5q-1 0-1-1zM10.500 7l3-1.500v5l-3-1.500" fill="none" stroke="#fff" stroke-width="1.200"/></svg>
      <svg viewBox="0 0 17 16"><path d="M1 6h2.500L7 2.500v11L3.500 10H1zM9 6q1.500 2 0 4M11.500 4.500q2.500 3.500 0 7M14 3q3.500 5 0 10" fill="none" stroke="#fff" stroke-width="1.100"/></svg>
      <svg viewBox="0 0 17 16"><path d="M5 3.500h11v8H5M9 12v2.500M6 14.500h7M3 7v6h2M1 2.500h4v4H1z" fill="none" stroke="#fff" stroke-width="1.200"/></svg>
      <div class="clock"><span>1:12 AM</span><span>1/14/2026</span></div>
      <svg class="action" viewBox="0 0 18 18"><path d="M1.500 2.500h15v11h-5L9 16l-2.500-2.500h-5z" fill="none" stroke="#fff" stroke-width="1.200"/></svg>
      <i class="show-desktop"></i>
    </div>
  </div>
</div>

</body>
</html>
```

FILE: styles.css
```css
* {
  box-sizing: border-box;
}

body {
  margin: 0;
  font-family: 'Open Sans', 'Noto Sans', sans-serif;
  font-size: 12px;
  letter-spacing: -0.3px;
  color: #1a1a1a;
}

svg {
  display: block;
  flex: none;
}

.sprite {
  position: absolute;
  width: 0;
  height: 0;
}

.glyph {
  font-family: 'Open Sans', sans-serif;
  font-size: 8px;
  font-weight: 800;
  letter-spacing: 0;
  text-anchor: middle;
}

.i16 {
  width: 16px;
  height: 16px;
}

.desktop {
  position: relative;
  width: 1360px;
  height: 768px;
  overflow: hidden;
  background:
    radial-gradient(ellipse 1150px 640px at 0 640px, rgba(0, 184, 255, 0.9) 15%, rgba(0, 184, 255, 0) 100%),
    linear-gradient(95deg, #009cf7 0%, #008fee 17%, #0069d6 45%, #0349c6 75%, #043cb6 100%);
}

/* Desktop icons */
.icon-grid {
  display: flex;
}

.icon-column {
  width: 75px;
}

.icon-column:first-child {
  width: 74px;
}

.desk-icon {
  display: flex;
  flex-direction: column;
  align-items: center;
  height: 99px;
  padding-top: 7px;
  color: #fff;
  line-height: 15px;
  text-align: center;
  white-space: nowrap;
  letter-spacing: -0.2px;
  text-shadow: 0 1px 2px rgba(0, 0, 0, 0.6);
}

.desk-icon span {
  margin-top: 3px;
}

.pic {
  position: relative;
  width: 48px;
  height: 48px;
}

.pic svg {
  width: 48px;
  height: 48px;
}

.pic .badge {
  position: absolute;
  left: 0;
  bottom: 0;
  width: 12px;
  height: 12px;
}

.pic.doc {
  margin-left: -3px;
}

/* Explorer window */
.window {
  position: absolute;
  left: 127px;
  top: 74px;
  display: flex;
  flex-direction: column;
  width: 1125px;
  height: 593px;
  padding-left: 1px;
  background: #fff;
}

.title-bar {
  display: flex;
  align-items: center;
  height: 31px;
  padding: 0 0 0 8px;
}

.quick-access {
  display: flex;
  align-items: center;
}

.quick-access .bar {
  width: 1px;
  height: 12px;
  margin-left: 7px;
  background: #8f8f8f;
}

.quick-access .props {
  margin: 0 7px 0 9px;
}

.qa-menu {
  width: 8px;
  height: 7px;
  margin: 2px 1px 0 5px;
}

.title {
  margin-left: 7px;
  letter-spacing: -0.35px;
  color: #000;
}

.caption-buttons {
  display: flex;
  gap: 34px;
  margin-left: auto;
  margin-right: 18px;
}

.caption-buttons svg {
  width: 12px;
  height: 12px;
}

.tabs {
  display: flex;
  height: 24px;
  line-height: 23px;
  border-bottom: 1px solid #dadbdc;
}

.tab {
  width: 56px;
  text-align: center;
  color: #333;
}

.tab.file {
  color: #fff;
  background: #0063b1;
}

.tab.active {
  width: 58px;
  height: 24px;
  margin-right: 1px;
  line-height: 22px;
  background: #f5f6f7;
  border: 1px solid #dadbdc;
  border-bottom: 0;
}

.tabs-right {
  display: flex;
  align-items: center;
  gap: 9px;
  margin-left: auto;
  padding-right: 4px;
}

.collapse {
  width: 10px;
  height: 6px;
  color: #aaa;
}

.help {
  width: 16px;
  height: 16px;
  border-radius: 8px;
  border: 1px solid #1a5ba0;
  background: #0067c0;
  color: #fff;
  font-weight: bold;
  line-height: 14px;
  text-align: center;
}

/* Ribbon */
.ribbon {
  display: flex;
  height: 92px;
  padding-top: 4px;
  background: #f5f6f7;
  border-bottom: 1px solid #d3d5d8;
  letter-spacing: -0.5px;
}

.group {
  display: flex;
  flex-direction: column;
  height: 85px;
  border-right: 1px solid #e1e3e5;
  color: #222;
}

.group-body {
  display: flex;
  height: 71px;
}

.group-name {
  line-height: 15px;
  text-align: center;
  letter-spacing: -0.3px;
  color: #444;
}

.clipboard { width: 263px; }
.organize { width: 191px; }
.organize .group-name { padding-right: 2px; }
.new { width: 145px; }
.opening { width: 133px; }
.selecting { width: 115px; }
.selecting .group-body { padding-left: 7px; }

.big {
  display: flex;
  flex-direction: column;
  align-items: center;
  flex: none;
  line-height: 13px;
  text-align: center;
  white-space: nowrap;
  letter-spacing: -0.3px;
}

.big svg {
  width: 28px;
  height: 30px;
  margin: 3px 0 6px;
}

.off {
  color: #777;
}

.big.pin { width: 78px; letter-spacing: -0.4px; }
.big.pin svg { width: 24px; height: 24px; margin: 7px 0 8px; }
.big.copy { width: 31px; }
.big.paste { width: 52px; }
.big.paste svg { width: 24px; }
.big.move { width: 48px; }
.big.move svg { margin-left: 4px; }
.big.copyto { width: 36px; }
.big.copyto svg { margin-left: 5px; }
.big.delete { width: 48px; }
.big.delete svg { height: 28px; margin: 5px 0 6px; }
.big.rename { width: 40px; }
.big.rename svg { width: 30px; height: 28px; margin: 3px 0 8px; }
.big.newfolder { width: 51px; }
.big.newfolder svg { width: 20px; height: 28px; margin: 3px 0 8px; }
.big.properties { width: 64px; }
.big.properties svg { width: 22px; height: 28px; margin: 5px 0 6px; }

.divider {
  width: 1px;
  height: 57px;
  margin: 3px 0 0 8px;
  background: #dfe1e4;
}

.caret {
  display: inline-block;
  margin-left: 1px;
  border: 3px solid transparent;
  border-top: 3px solid currentColor;
  border-bottom: 0;
  vertical-align: 3px;
}

.off .caret {
  opacity: 0.6;
}

.small-list {
  white-space: nowrap;
}

.small {
  display: flex;
  align-items: center;
  height: 22px;
  gap: 3px;
}

.small .wide {
  width: 17px;
  margin-right: -1px;
}

.small .caret {
  margin-left: 0;
}

/* Address row */
.nav-bar {
  display: flex;
  height: 35px;
  padding: 6px 0 0 12px;
}

.nav-bar span {
  margin-top: -1px;
}

.history-buttons {
  display: flex;
  align-items: center;
  width: 94px;
  height: 22px;
}

.back,
.forward {
  width: 14px;
  height: 12px;
  color: #d0d0d0;
}

.forward {
  margin-left: 16px;
  transform: scaleX(-1);
}

.recent {
  width: 6px;
  height: 4px;
  margin-left: 13px;
  color: #bbb;
}

.up {
  width: 12px;
  height: 14px;
  margin-left: 12px;
}

.address {
  display: flex;
  align-items: center;
  width: 791px;
  height: 22px;
  padding-left: 3px;
  border: 1px solid #d9d9d9;
  color: #000;
}

.crumb {
  width: 5px;
  height: 8px;
  margin: 0 9px 0 6px;
}

.drop {
  width: 10px;
  height: 6px;
  margin: 2px 3px 0 auto;
  color: #666;
}

.reload {
  display: flex;
  align-items: center;
  justify-content: center;
  width: 17px;
  height: 20px;
  border-left: 1px solid #d9d9d9;
}

.reload svg {
  width: 12px;
  height: 12px;
}

.search {
  display: flex;
  align-items: center;
  justify-content: space-between;
  width: 202px;
  height: 22px;
  margin-left: 12px;
  padding: 0 8px;
  border: 1px solid #d9d9d9;
  letter-spacing: -0.45px;
  color: #6d6d6d;
}

.search svg {
  width: 12px;
  height: 12px;
}

/* Tree and file list */
.main {
  display: flex;
  height: 387px;
}

.tree {
  width: 139px;
  overflow: hidden;
  color: #000;
}

.node {
  display: flex;
  align-items: center;
  gap: 5px;
  height: 24px;
  padding-left: 32px;
  white-space: nowrap;
}

.node span {
  margin-top: -2px;
}

.node.sub {
  padding-left: 40px;
}

.node.selected {
  background: #d9d9d9;
}

.scrollbar {
  display: flex;
  flex-direction: column;
  align-items: center;
  justify-content: space-between;
  width: 16px;
  margin-left: 1px;
  padding: 6px 1px 6px 0;
  background: #f0f0f0;
  color: #505050;
}

.scrollbar svg {
  width: 9px;
  height: 6px;
}

.thumb {
  width: 15px;
  height: 117px;
  margin: auto 0 7px;
  background: #cdcdcd;
}

.files {
  flex: 1;
  padding-left: 4px;
}

.columns {
  display: flex;
  height: 27px;
  line-height: 26px;
  color: #5d6b7c;
}

.col {
  position: relative;
  border-right: 1px solid #e5e5e5;
}

.col.name {
  width: 536px;
  padding-left: 17px;
}

.col.size {
  width: 80px;
  padding-left: 6px;
}

.sort {
  position: absolute;
  left: 137px;
  top: 0;
  width: 9px;
  height: 5px;
}

.empty {
  margin-top: 13px;
  padding-right: 1px;
  line-height: 16px;
  text-align: center;
  color: #6d6d6d;
}

.status-bar {
  display: flex;
  align-items: center;
  justify-content: space-between;
  height: 24px;
  padding: 0 6px 0 14px;
  color: #1e3264;
}

.status-bar span {
  margin-top: -2px;
}

.view-modes {
  display: flex;
}

.mode {
  display: flex;
  align-items: center;
  justify-content: center;
  width: 21px;
  height: 23px;
}

.mode svg {
  width: 18px;
  height: 16px;
}

.mode.on {
  width: 22px;
  background: #cce8ff;
  border: 1px solid #3c9bd1;
}

/* Menus */
.menu {
  position: absolute;
  padding: 4px 2px;
  background: #eee;
  border: 1px solid #a0a0a0;
  letter-spacing: -0.34px;
  color: #000;
}

.menu .item {
  display: flex;
  align-items: center;
  height: 22px;
  padding-bottom: 2px;
}

.menu .item svg {
  position: relative;
  top: 1px;
}

.menu hr {
  height: 1px;
  margin: 3px 8px;
  border: 0;
  background: #919191;
}

.menu .hot {
  background: #fff;
}

.menu .item.off {
  color: #6d6d6d;
}

.context {
  left: 548px;
  top: 161px;
  width: 234px;
  height: 287px;
}

.context .item {
  justify-content: space-between;
  padding-left: 32px;
  padding-right: 8px;
}

.context .item svg {
  width: 8px;
  height: 14px;
}

.context kbd {
  margin-right: 9px;
  font-family: inherit;
  letter-spacing: 0;
}

.submenu {
  left: 776px;
  top: 389px;
  width: 297px;
  height: 303px;
}

.submenu .item {
  gap: 8px;
  padding-left: 8px;
}

.watermark {
  position: absolute;
  left: 1118px;
  top: 656px;
  width: 194px;
  height: 66px;
  opacity: 0.6;
  stroke: #b7cdf5;
}

.watermark text {
  font-family: Roboto, sans-serif;
  font-size: 51px;
  letter-spacing: 0;
  fill: #b7cdf5;
  stroke-width: 1px;
}

/* Taskbar */
.taskbar {
  position: absolute;
  left: 0;
  bottom: 0;
  display: flex;
  width: 1360px;
  height: 40px;
  background: linear-gradient(90deg, #00141f, #000b1e);
  color: #fff;
}

.start,
.task-view {
  display: flex;
  align-items: center;
  justify-content: center;
  width: 48px;
}

.start svg {
  width: 16px;
  height: 16px;
}

.task-view svg {
  width: 18px;
  height: 18px;
}

.search-box {
  display: flex;
  align-items: center;
  width: 288px;
  padding: 0 4px 0 12px;
  background: #f0f0f0;
  border: 1px solid #cfcfcf;
  border-left: 0;
  color: #444;
  font-size: 15px;
  letter-spacing: -0.52px;
}

.search-box .mag {
  width: 17px;
  height: 17px;
  margin-right: 11px;
  color: #222;
}

.hats {
  width: 72px;
  height: 38px;
  margin-left: auto;
}

.apps {
  display: flex;
  gap: 1px;
  margin-left: 3px;
}

.app {
  display: flex;
  align-items: center;
  justify-content: center;
  width: 48px;
}

.app svg {
  width: 24px;
  height: 24px;
}

.app.current {
  margin: 0;
  background: #34474f;
  box-shadow: inset 0 -2px #76b9ed;
}

.app.running {
  width: 40px;
  margin: 0 4px;
  box-shadow: inset 0 -2px #76b9ed;
}

.tray {
  display: flex;
  align-items: center;
  gap: 8px;
  margin-left: auto;
  padding-right: 4px;
}

.tray svg {
  width: 16px;
  height: 16px;
}

.clock {
  display: flex;
  flex-direction: column;
  width: 56px;
  line-height: 18px;
  text-align: center;
  letter-spacing: -0.4px;
}

.tray .action {
  width: 18px;
  height: 18px;
  margin: 0 11px 0 7px;
}

.show-desktop {
  width: 1px;
  height: 40px;
  background: #5b6570;
}
```
